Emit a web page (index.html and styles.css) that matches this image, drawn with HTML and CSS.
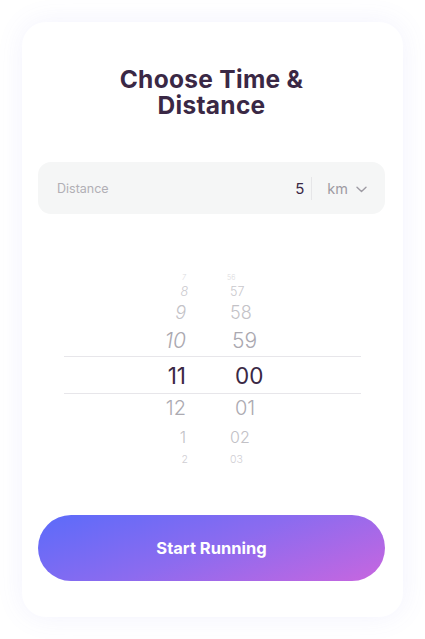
FILE: index.html
```
<!DOCTYPE html>
<html>
<head>
<meta charset="utf-8">
<link rel="stylesheet" href="styles.css">
</head>
<body>
<div class="card">
  <h1 class="title"><span class="tl">Choose Time &amp;</span><span class="tl">Distance</span></h1>
  <div class="field">
    <span class="label">Distance</span>
    <span class="value">5</span>
    <span class="divider"></span>
    <span class="unit">km</span>
    <svg class="chev" width="11" height="7" viewBox="0 0 11 7"><path d="M1 1.2 L5.5 5.5 L10 1.2" fill="none" stroke="#9e9ba3" stroke-width="1.4" stroke-linecap="round" stroke-linejoin="round"/></svg>
  </div>
  <div class="picker">
    <div class="row r1"><span class="h it">7</span><span class="m">56</span></div>
    <div class="row r2"><span class="h it">8</span><span class="m">57</span></div>
    <div class="row r3"><span class="h it">9</span><span class="m">58</span></div>
    <div class="row r4"><span class="h it">10</span><span class="m">59</span></div>
    <div class="row r5 sel"><span class="h">11</span><span class="m">00</span></div>
    <div class="row r6"><span class="h">12</span><span class="m">01</span></div>
    <div class="row r7"><span class="h">1</span><span class="m">02</span></div>
    <div class="row r8"><span class="h">2</span><span class="m">03</span></div>
  </div>
  <button class="start">Start Running</button>
</div>
</body>
</html>
```
FILE: styles.css
```
* { box-sizing: border-box; }
html, body { margin: 0; padding: 0; background: #ffffff; }
body { width: 425px; height: 639px; overflow: hidden; font-family: "Inter", "Noto Sans", sans-serif; }
.card {
  margin: 22px 0 0 22px;
  width: 381px;
  height: 595px;
  background: #fff;
  border-radius: 24px;
  box-shadow: 0 0 28px rgba(110, 110, 230, 0.09);
  padding: 0 18px 0 16px;
  display: flex;
  flex-direction: column;
}
.title {
  margin: 44px 0 0 0;
  font-size: 24.5px;
  font-weight: 700;
  color: #3a2845;
  text-align: center;
  letter-spacing: 0.3px;
  display: flex;
  flex-direction: column;
  align-items: center;
}
.tl { display: block; height: 26px; line-height: 26px; }
.field {
  margin-top: 44px;
  height: 52px;
  background: #f5f6f6;
  border-radius: 13px;
  display: flex;
  align-items: center;
  padding: 0 18px 0 19px;
}
.label { font-size: 12.5px; color: #b1afb5; flex: 1; }
.value { font-size: 15px; color: #3a2845; margin-right: 7px; }
.divider { width: 1px; height: 23px; background: #e6e6e8; margin-right: 15px; }
.unit { font-size: 14.5px; color: #9e9ba3; margin-right: 8px; }
.chev { display: block; margin-top: 2px; }
.picker {
  margin: 56px 24px 0 26px;
  display: flex;
  flex-direction: column;
  font-weight: 300;
}
.row { display: flex; align-items: center; }
.h { width: 122px; text-align: right; }
.m { margin-left: 43px; }
.it { font-style: italic; }
.r1 { height: 14px; font-size: 7px; color: #dcdce0; }
.r2 { height: 15px; font-size: 12.5px; color: #c9c8cd; }
.r3 { height: 26px; font-size: 18px; color: #c3c2c7; }
.r4 { height: 31px; font-size: 21px; color: #aaa8b0; }
.r5 { height: 38px; font-size: 22.5px; color: #3a2845; font-weight: 400; border-top: 1px solid #e7e6ea; border-bottom: 1px solid #e7e6ea; }
.r6 { height: 28px; font-size: 20px; color: #acaab1; }
.r7 { height: 29px; font-size: 16px; color: #c2c1c6; }
.r8 { height: 16px; font-size: 10.5px; color: #cfced3; }
.r1 .m { margin-left: 41px; }
.r2 .m { margin-left: 42px; }
.r3 .m { margin-left: 44px; }
.r4 .m { margin-left: 46px; }
.r5 .m { margin-left: 49px; }
.r6 .m { margin-left: 49px; }
.r7 .m { margin-left: 44px; }
.r8 .m { margin-left: 42px; }
.r2 .h, .r8 .h { padding-right: 0; width: 124px; }
.start {
  margin-top: auto;
  margin-bottom: 36px;
  height: 66px;
  border: none;
  border-radius: 33px;
  background: linear-gradient(160deg, #5b6bfa 0%, #8c6bef 50%, #c866df 100%);
  color: #fff;
  font-family: "Inter", sans-serif;
  font-weight: 700;
  font-size: 16.5px;
}
```
